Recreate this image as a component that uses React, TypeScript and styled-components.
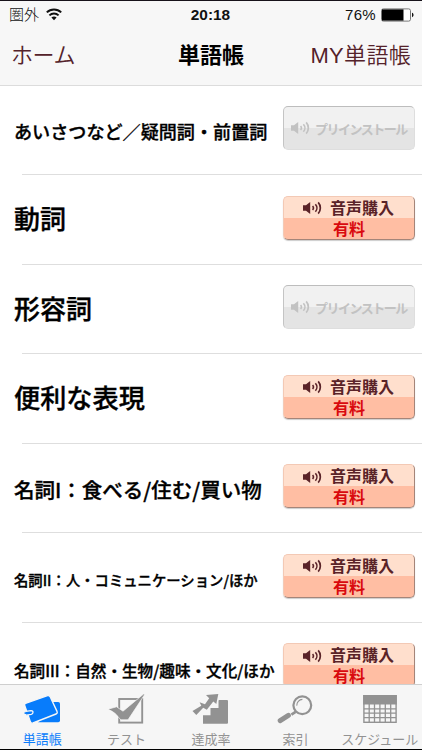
import React, { FC } from "react";
import styled, { createGlobalStyle } from "styled-components";

const GlobalStyle = createGlobalStyle`
    * {
        box-sizing: border-box;
    }
    body {
        margin: 0;
        background: #fff;
        font-family: "Liberation Sans", "Noto Sans CJK JP", sans-serif;
    }
    svg {
        flex: none;
    }
`;

const Screen = styled.div`
    display: flex;
    flex-direction: column;
    width: 422px;
    height: 750px;
    overflow: hidden;
    background: #fff;
    border-top: 1px solid #17121a;
    border-bottom: 1px solid #000;
`;
const Header = styled.header`
    flex: none;
    height: 84.6px;
    background: #f7f7f7;
    border-bottom: 1px solid #dcdcdc;
`;
const StatusBar = styled.div`
    display: grid;
    grid-template-columns: 1fr auto 1fr;
    align-items: center;
    height: 27px;
    padding: 0 8px 0 9px;
    font-size: 15px;
    line-height: 27px;
    color: #111;
`;
const Carrier = styled.div`
    display: flex;
    align-items: center;
    gap: 7px;
    font-weight: 300;
`;
const Clock = styled.div`
    padding-right: 2px;
    font-size: 15.4px;
    font-weight: bold;
`;
const Power = styled.div`
    display: flex;
    align-items: center;
    justify-content: flex-end;
    gap: 5px;
    letter-spacing: 0.3px;
`;
const NavBar = styled.div`
    display: grid;
    grid-template-columns: 1fr auto 1fr;
    align-items: center;
    height: 56px;
    padding: 0 11px;
    font-size: 22px;
    line-height: 56px;
`;
const NavLink = styled.div<{ $right?: boolean }>`
    color: #54222a;
    font-weight: 350;
    text-align: ${({ $right }) => ($right ? "right" : "left")};
    letter-spacing: ${({ $right }) => ($right ? "0.3px" : "-0.4px")};
`;
const Title = styled.div`
    font-weight: bold;
`;
const List = styled.main`
    flex: 1;
    min-height: 0;
    overflow: hidden;
`;
const Row = styled.div`
    display: flex;
    align-items: center;
    justify-content: space-between;
    height: 88.5px;
    padding: 0 7px 0 14px;
`;
const Separator = styled.div`
    height: 1px;
    margin-left: 22px;
    background: #dedede;
`;
const Label = styled.div<{ $size: number }>`
    padding-top: ${({ $size }) => ($size < 17 ? 6 : $size < 22 ? 3 : 0)}px;
    padding-bottom: ${({ $size }) => ($size < 22 ? 0 : 2)}px;
    color: #000;
    font-family: "Noto Sans CJK JP", sans-serif;
    font-size: ${({ $size }) => $size}px;
    font-weight: 500;
    line-height: 40px;
    white-space: nowrap;
    -webkit-text-stroke: 0.35px #000;
`;
const BuyButton = styled.div`
    display: flex;
    flex-direction: column;
    width: 132px;
    height: 44px;
    margin-bottom: 3px;
    border: 1px solid #f3c9b5;
    border-right-color: #a58579;
    border-bottom-color: #a58579;
    border-radius: 5px;
    background: linear-gradient(#ffdfcd 0 21px, #ffbea3 21px);
    font-weight: bold;
    font-size: 16px;
    line-height: 21px;
    box-shadow: 0 1px 1px #ccc;
`;
const BuyTop = styled.div`
    display: flex;
    align-items: center;
    height: 23px;
    padding-left: 19px;
    gap: 8px;
    color: #5a2328;
`;
const BuyPrice = styled.div`
    color: #d90a0e;
    text-align: center;
    line-height: 19px;
`;
const InstalledButton = styled.div`
    display: flex;
    align-items: center;
    gap: 5px;
    width: 132px;
    height: 44px;
    margin-bottom: 3px;
    padding-left: 7px;
    border: 1px solid #dedede;
    border-top-color: #bdbdbd;
    border-left-color: #c4c4c4;
    border-radius: 5px;
    background: linear-gradient(#f1f1f1 0 21px, #e4e4e4 21px);
    color: #c2c2c2;
    font-size: 13px;
    font-weight: bold;
    letter-spacing: -1.5px;
    white-space: nowrap;
`;
const TabBar = styled.nav`
    display: flex;
    flex: none;
    height: 65px;
    background: #f6f6f6;
    border-top: 1px solid #cfcfcf;
`;
const Tab = styled.div<{ $active?: boolean }>`
    display: flex;
    flex: 1 1 0;
    flex-direction: column;
    align-items: center;
    gap: 5px;
    min-width: 0;
    padding-top: 8px;
    color: ${({ $active }) => ($active ? "#087cfb" : "#929292")};
    font-size: 13px;
    line-height: 20px;
    white-space: nowrap;
`;

const WifiIcon: FC = () => (
    <svg width="16" height="13" viewBox="0 0 16 13" fill="none" stroke="#111">
        <path d="M.8 4.4a10.4 10.4 0 0 1 14.4 0" strokeWidth="2" />
        <path d="M3.4 7.4a6.6 6.6 0 0 1 9.2 0" strokeWidth="1.9" />
        <path d="M8 12.3 5.4 9.6a3.8 3.8 0 0 1 5.2 0z" fill="#111" stroke="none" />
    </svg>
);

const BatteryIcon: FC = () => (
    <svg width="33" height="14" viewBox="0 0 33 14">
        <rect x="0.5" y="0.9" width="29" height="12.2" rx="1.8" fill="#fff" stroke="#777" />
        <path d="M1 1.4h21.5v11.2H1z" fill="#000" />
        <path d="M31 4.8c2 .6 2 3.8 0 4.4z" fill="#111" />
    </svg>
);

const SpeakerIcon: FC = () => (
    <svg width="19" height="14" viewBox="0 0 19 14" fill="none" stroke="currentColor">
        <path d="M0 4.2h3L7.2 1v12L3 9.8H0z" fill="currentColor" stroke="none" />
        <path d="M9.6 5a3 3 0 0 1 0 4" strokeWidth="1.5" />
        <path d="M12.4 3.2a5.6 5.6 0 0 1 0 7.6" strokeWidth="1.6" />
        <path d="M15.2 1.4a8.4 8.4 0 0 1 0 11.2" strokeWidth="1.7" />
    </svg>
);

const WalletIcon: FC = () => (
    <svg width="40" height="32" viewBox="0 0 40 32" fill="currentColor">
        <path d="M31 9h5.2q1.8 0 1.8 1.8v16.7q0 1.8-1.8 1.8H16z" />
        <path
            d="M4.2 10.2 25.5 2.6q1.8-.5 2.7 1.2l6.8 14.6q.8 1.9-1 2.6L11 30q-1.8.6-2.6-1.1L2.7 12.4q-.6-1.6 1.5-2.2z"
            stroke="#f6f6f6"
            strokeWidth="1.4"
        />
        <path
            d="M3.8 18.4 9 17.6q2 0 2 1.7t-1.8 2.1l-4.6.8"
            stroke="#f6f6f6"
            strokeWidth="1.3"
        />
        <path d="M2.6 19.2h6v1.4l-6 .3z" />
    </svg>
);

const TestIcon: FC = () => (
    <svg width="40" height="32" viewBox="0 0 40 32" fill="currentColor">
        <rect x="12.2" y="6" width="23" height="23.6" fill="none" stroke="currentColor" strokeWidth="1.9" />
        <path
            d="M1 16.2 9.6 13.8 16 18.2 36.6 1l.9.8L21 26.8h-7.2Q8 18.5 1 16.2z"
            stroke="#f6f6f6"
            strokeWidth="0.7"
        />
    </svg>
);

const StairsIcon: FC = () => (
    <svg width="40" height="32" viewBox="0 0 40 32" fill="currentColor">
        <path d="M12 30.7v-8.4h7.5V15h8V7.8q0-.8.8-.8H36q1 0 1 1v21.7q0 1-1 1z" />
        <path d="m15 1.9 12.3-1-2 10-3-2.5-6.5 8.4-3.6-2.1-6.9 7.4-3.8-4.2 8.8-5.2-1.7-3.4 5.4 2 4.2-6z" />
    </svg>
);

const SearchIcon: FC = () => (
    <svg width="40" height="32" viewBox="0 0 40 32" fill="none" stroke="currentColor">
        <circle cx="27.3" cy="12.2" r="8.9" strokeWidth="2.2" />
        <path d="M21.8 12.6a5.8 5.8 0 0 1 5.6-6.2" strokeWidth="1.1" />
        <path d="m20.6 18.9-4.2 2.8" strokeWidth="2.6" />
        <path d="M5.2 27.7 13.4 22.4" strokeWidth="5" strokeLinecap="round" />
    </svg>
);

const ScheduleIcon: FC = () => (
    <svg width="40" height="32" viewBox="0 0 40 32" fill="none" stroke="currentColor">
        <rect x="3.9" y="2.7" width="32.2" height="26.6" strokeWidth="1.4" />
        <path d="M3.2 2h33.6v9.4H3.2z" fill="currentColor" stroke="none" />
        <path d="M4 15.9h32M4 20.2h32M4 24.7h32" strokeWidth="1.3" />
        <path d="M9.2 11v18M14.5 11v18M19.9 11v18M25.3 11v18M30.7 11v18" strokeWidth="1.3" />
    </svg>
);

interface ICategory {
    name: string;
    size: number;
    installed?: boolean;
}

const categories: ICategory[] = [
    { name: "あいさつなど／疑問詞・前置詞", size: 18.1, installed: true },
    { name: "動詞", size: 26 },
    { name: "形容詞", size: 26, installed: true },
    { name: "便利な表現", size: 26.2 },
    { name: "名詞I：食べる/住む/買い物", size: 20.5 },
    { name: "名詞II：人・コミュニケーション/ほか", size: 14.35 },
    { name: "名詞III：自然・生物/趣味・文化/ほか", size: 15.6 },
];

const tabs = [
    { name: "単語帳", Icon: WalletIcon },
    { name: "テスト", Icon: TestIcon },
    { name: "達成率", Icon: StairsIcon },
    { name: "索引", Icon: SearchIcon },
    { name: "スケジュール", Icon: ScheduleIcon },
];

const App: FC = () => {
    return (
        <React.Fragment>
            <GlobalStyle />
            <Screen>
                <Header>
                    <StatusBar>
                        <Carrier>
                            圏外
                            <WifiIcon />
                        </Carrier>
                        <Clock>20:18</Clock>
                        <Power>
                            76%
                            <BatteryIcon />
                        </Power>
                    </StatusBar>
                    <NavBar>
                        <NavLink>ホーム</NavLink>
                        <Title>単語帳</Title>
                        <NavLink $right>MY単語帳</NavLink>
                    </NavBar>
                </Header>
                <List>
                    {categories.map(({ name, size, installed }) => (
                        <React.Fragment key={name}>
                            <Row>
                                <Label $size={size}>{name}</Label>
                                {installed ? (
                                    <InstalledButton>
                                        <SpeakerIcon />
                                        プリインストール
                                    </InstalledButton>
                                ) : (
                                    <BuyButton>
                                        <BuyTop>
                                            <SpeakerIcon />
                                            音声購入
                                        </BuyTop>
                                        <BuyPrice>有料</BuyPrice>
                                    </BuyButton>
                                )}
                            </Row>
                            <Separator />
                        </React.Fragment>
                    ))}
                </List>
                <TabBar>
                    {tabs.map(({ name, Icon }, index) => (
                        <Tab key={name} $active={index === 0}>
                            <Icon />
                            {name}
                        </Tab>
                    ))}
                </TabBar>
            </Screen>
        </React.Fragment>
    );
};

export default App;
